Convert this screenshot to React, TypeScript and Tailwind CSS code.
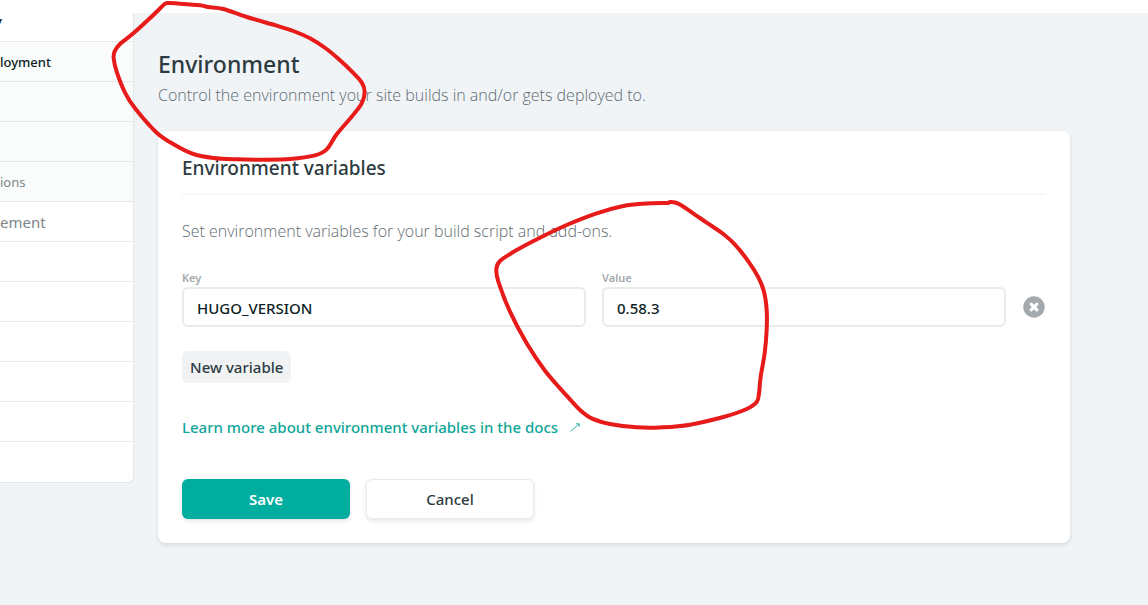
import { useState } from "react";

type Point = [number, number];

const titleLoop: Point[] = [
  [503, 9], [540, 11], [600, 16], [625, 21], [670, 27], [740, 51], [830, 77], [880, 93], [930, 115],
  [980, 147], [1020, 181], [1055, 214], [1085, 247], [1094, 275], [1085, 310], [1055, 350], [1010, 403],
  [980, 448], [945, 466], [870, 477], [790, 479], [710, 478], [640, 474], [580, 462], [530, 438],
  [470, 398], [405, 325], [375, 278], [350, 215], [341, 175], [344, 154], [360, 132], [400, 100],
  [460, 45], [493, 13], [503, 9],
];

const valueLoop: Point[] = [
  [2005, 609], [2012, 606], [2035, 611], [2075, 637], [2120, 668], [2170, 702], [2205, 734], [2245, 784],
  [2275, 832], [2292, 875], [2300, 930], [2300, 990], [2294, 1060], [2282, 1130], [2277, 1180],
  [2270, 1206], [2240, 1227], [2170, 1251], [2070, 1274], [1990, 1282], [1910, 1282], [1830, 1272],
  [1775, 1255], [1740, 1230], [1700, 1187], [1635, 1112], [1580, 1030], [1530, 935], [1495, 845],
  [1489, 808], [1500, 783], [1550, 750], [1620, 713], [1700, 675], [1790, 640], [1870, 618],
  [1930, 611], [2005, 609],
];

// Catmull-Rom spline through the points, written as cubic segments.
function smoothPath(points: Point[]): string {
  let d = `M${points[0][0]} ${points[0][1]}`;
  for (let i = 0; i < points.length - 1; i++) {
    const a = points[Math.max(i - 1, 0)];
    const b = points[i];
    const c = points[i + 1];
    const e = points[Math.min(i + 2, points.length - 1)];
    d += `C${b[0] + (c[0] - a[0]) / 6} ${b[1] + (c[1] - a[1]) / 6} ${c[0] - (e[0] - b[0]) / 6} ${c[1] - (e[1] - b[1]) / 6} ${c[0]} ${c[1]}`;
  }
  return d;
}

function Annotations() {
  return (
    <svg
      className="pointer-events-none absolute top-0 left-0 h-[605px] w-[1148px] max-w-none"
      viewBox="0 0 3444 1815"
      fill="none"
      stroke="#e81b1b"
      strokeWidth="12"
      strokeLinecap="round"
      strokeLinejoin="round"
      aria-hidden="true"
    >
      <path d={smoothPath(titleLoop)} />
      <path d={smoothPath(valueLoop)} />
    </svg>
  );
}

const subItems = [
  { label: "loyment", active: true },
  { label: "", active: false },
  { label: "", active: false },
  { label: "ions", active: false },
];

const items = ["ement", "", "", "", "", "", ""];

function Sidebar() {
  return (
    <nav className="w-[134px] shrink-0 self-start overflow-hidden rounded-br-md border-r border-b border-[#e4e8ea] bg-white">
      <ul>
        <li className="h-7">
          <a href="#" className="-ml-1.5 block text-[15px] leading-4 font-medium text-[#0e1e25]">y</a>
        </li>
        {subItems.map((item, i) => (
          <li key={i} className="h-10 border-t border-[#e6e8e9] bg-[#fafcfb]">
            <a
              href="#"
              className={
                item.active
                  ? "block text-[13px] leading-10 font-medium text-[#0e1e25]"
                  : "block text-[13px] leading-10 text-[#7d868a]"
              }
            >
              {item.label}
            </a>
          </li>
        ))}
        {items.map((label, i) => (
          <li key={i} className="h-10 border-t border-[#e6e8e9] last:h-[41px]">
            <a href="#" className="block text-[15px] leading-10 text-[#7d868a]">{label}</a>
          </li>
        ))}
      </ul>
    </nav>
  );
}

function Field({ id, label, value, onChange }: { id: string; label: string; value: string; onChange: (v: string) => void }) {
  return (
    <div className="min-w-0 flex-1">
      <label htmlFor={id} className="block text-[11px] leading-[18px] font-semibold text-[#a3a9ac]">{label}</label>
      <input
        id={id}
        value={value}
        onChange={(e) => onChange(e.target.value)}
        className="block h-10 w-full rounded-md border-2 border-[#e9ebeb] bg-white px-[13px] pt-0.5 text-[15px] font-medium text-[#0e1e25] outline-none"
      />
    </div>
  );
}

export default function App() {
  const [name, setName] = useState("HUGO_VERSION");
  const [value, setValue] = useState("0.58.3");

  return (
    <div className="relative min-h-screen overflow-hidden bg-[#f0f4f7] font-['Noto_Sans','Open_Sans',sans-serif] text-[#2d3b41]">
      <div className="h-[13px] bg-white" />
      <div className="flex gap-6">
        <Sidebar />
        <main className="max-w-[912px] flex-1 pt-9 pb-8">
          <h1 className="text-[23px] leading-[30px] font-medium">Environment</h1>
          <p className="font-['Open_Sans',sans-serif] text-base leading-8 font-light text-[#5f6b70]">
            Control the environment your site builds in and/or gets deployed to.
          </p>
          <section className="mt-5 rounded-lg bg-white p-6 shadow-[0_2px_4px_rgba(14,30,37,0.12)]">
            <h2 className="border-b-2 border-[#f5f6f6] pb-3 text-[19px] leading-[26px] font-medium">
              Environment variables
            </h2>
            <form onSubmit={(e) => e.preventDefault()}>
              <p className="mt-6 font-['Open_Sans',sans-serif] text-base leading-6 font-light text-[#5f6b70]">
                Set environment variables for your build script and add-ons.
              </p>
              <div className="mt-[26px] flex items-end gap-4">
                <Field id="key" label="Key" value={name} onChange={setName} />
                <Field id="value" label="Value" value={value} onChange={setValue} />
                <button type="button" aria-label="Delete variable" className="flex h-10 w-6 items-center justify-center">
                  <svg className="size-[22px]" viewBox="0 0 22 22" aria-hidden="true">
                    <circle cx="11" cy="11" r="10.7" fill="#a3a9ac" />
                    <path d="M8.1 8.1l5.8 5.8M13.9 8.1l-5.8 5.8" stroke="#fff" strokeWidth="3" strokeLinecap="round" />
                  </svg>
                </button>
              </div>
              <button type="button" className="mt-6 block h-8 rounded-md bg-[#f0f2f4] px-2 text-[15px] font-medium">
                New variable
              </button>
              <a href="#" className="mt-8 flex items-center gap-3 text-[15px] leading-6 font-medium text-[#0ea699]">
                Learn more about environment variables in the docs
                <svg className="size-2.5" viewBox="0 0 10 10" fill="none" stroke="currentColor" strokeWidth="0.9" aria-hidden="true">
                  <path d="M0.5 9.5L9 2M6 1.8H9.2V4.8" />
                </svg>
              </a>
              <div className="mt-10 flex gap-4">
                <button type="submit" className="h-10 w-[168px] rounded-md bg-[#00ad9f] text-[15px] font-semibold text-white shadow-[0_2px_4px_rgba(14,30,37,0.12)]">
                  Save
                </button>
                <button type="button" className="h-10 w-[168px] rounded-md border border-[#e9ebeb] bg-white text-[15px] font-medium shadow-[0_2px_4px_rgba(14,30,37,0.12)]">
                  Cancel
                </button>
              </div>
            </form>
          </section>
        </main>
      </div>
      <Annotations />
    </div>
  );
}
